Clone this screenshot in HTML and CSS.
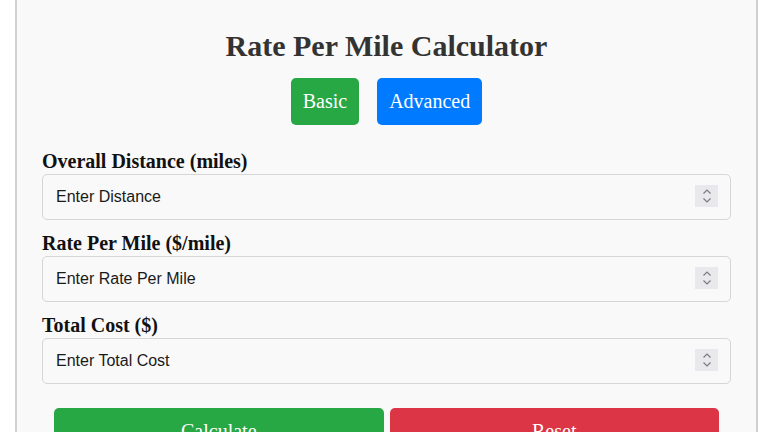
FILE: index.html
```html
<!DOCTYPE html>
<html>
<head>
<meta charset="utf-8">
<link rel="stylesheet" href="styles.css">
</head>
<body>
<div class="calc">
  <h1 class="title">Rate Per Mile Calculator</h1>
  <div class="modes">
    <button class="mode basic">Basic</button>
    <button class="mode advanced">Advanced</button>
  </div>
  <div class="field">
    <label class="label">Overall Distance (miles)</label>
    <div class="input-wrap">
      <input class="input" type="text" placeholder="Enter Distance">
      <span class="spin"><svg width="10" height="16" viewBox="0 0 10 16"><path d="M1.5 5.5 L5 2 L8.5 5.5 M1.5 10.5 L5 14 L8.5 10.5" fill="none" stroke="#7a7a80" stroke-width="1.2"/></svg></span>
    </div>
  </div>
  <div class="field">
    <label class="label">Rate Per Mile ($/mile)</label>
    <div class="input-wrap">
      <input class="input" type="text" placeholder="Enter Rate Per Mile">
      <span class="spin"><svg width="10" height="16" viewBox="0 0 10 16"><path d="M1.5 5.5 L5 2 L8.5 5.5 M1.5 10.5 L5 14 L8.5 10.5" fill="none" stroke="#7a7a80" stroke-width="1.2"/></svg></span>
    </div>
  </div>
  <div class="field">
    <label class="label">Total Cost ($)</label>
    <div class="input-wrap">
      <input class="input" type="text" placeholder="Enter Total Cost">
      <span class="spin"><svg width="10" height="16" viewBox="0 0 10 16"><path d="M1.5 5.5 L5 2 L8.5 5.5 M1.5 10.5 L5 14 L8.5 10.5" fill="none" stroke="#7a7a80" stroke-width="1.2"/></svg></span>
    </div>
  </div>
  <div class="actions">
    <button class="action calculate">Calculate</button>
    <button class="action reset">Reset</button>
  </div>
</div>
</body>
</html>
```
FILE: styles.css
```css
html, body {
  margin: 0;
  padding: 0;
  background: #ffffff;
  overflow: hidden;
}
body {
  font-family: "Liberation Serif", "Times New Roman", serif;
  height: 432px;
}
.calc {
  box-sizing: border-box;
  margin-left: 15px;
  width: 743px;
  background: #f9f9f9;
  border: 2px solid #d0d0d0;
  border-top: none;
  padding: 28px 25px 40px 25px;
  height: 600px;
}
.title {
  margin: 0;
  text-align: center;
  font-size: 30px;
  line-height: 36px;
  color: #333333;
  font-weight: bold;
}
.modes {
  display: flex;
  justify-content: center;
  gap: 18px;
  margin-top: 14px;
  margin-bottom: 25px;
}
.mode {
  font-family: "Liberation Serif", "Times New Roman", serif;
  font-size: 20px;
  line-height: 23px;
  padding: 12px 12px;
  border: none;
  border-radius: 5px;
  color: #ffffff;
}
.basic { background: #28a745; }
.advanced { background: #007bff; }
.field {
  margin-bottom: 12px;
}
.label {
  display: block;
  font-size: 20px;
  line-height: 23px;
  font-weight: bold;
  color: #111111;
  margin-bottom: 1px;
}
.input-wrap {
  position: relative;
}
.input {
  display: block;
  box-sizing: border-box;
  width: 100%;
  height: 46px;
  border: 1px solid #d6d6d6;
  border-radius: 5px;
  background: #f9f9f9;
  padding: 0 13px;
  font-family: "Liberation Sans", Arial, sans-serif;
  font-size: 16px;
  color: #222222;
  outline: none;
}
.input::placeholder {
  color: #1a1a1a;
}
.spin {
  position: absolute;
  right: 13px;
  top: 11px;
  width: 23px;
  height: 22px;
  background: #e9e9ed;
  display: flex;
  align-items: center;
  justify-content: center;
}
.actions {
  display: flex;
  gap: 6px;
  padding: 0 12px;
  margin-top: 24px;
}
.action {
  flex: 1;
  font-family: "Liberation Serif", "Times New Roman", serif;
  font-size: 20px;
  line-height: 23px;
  padding: 12px;
  border: none;
  border-radius: 5px;
  color: #ffffff;
}
.calculate { background: #28a745; }
.reset { background: #dc3545; }
```
